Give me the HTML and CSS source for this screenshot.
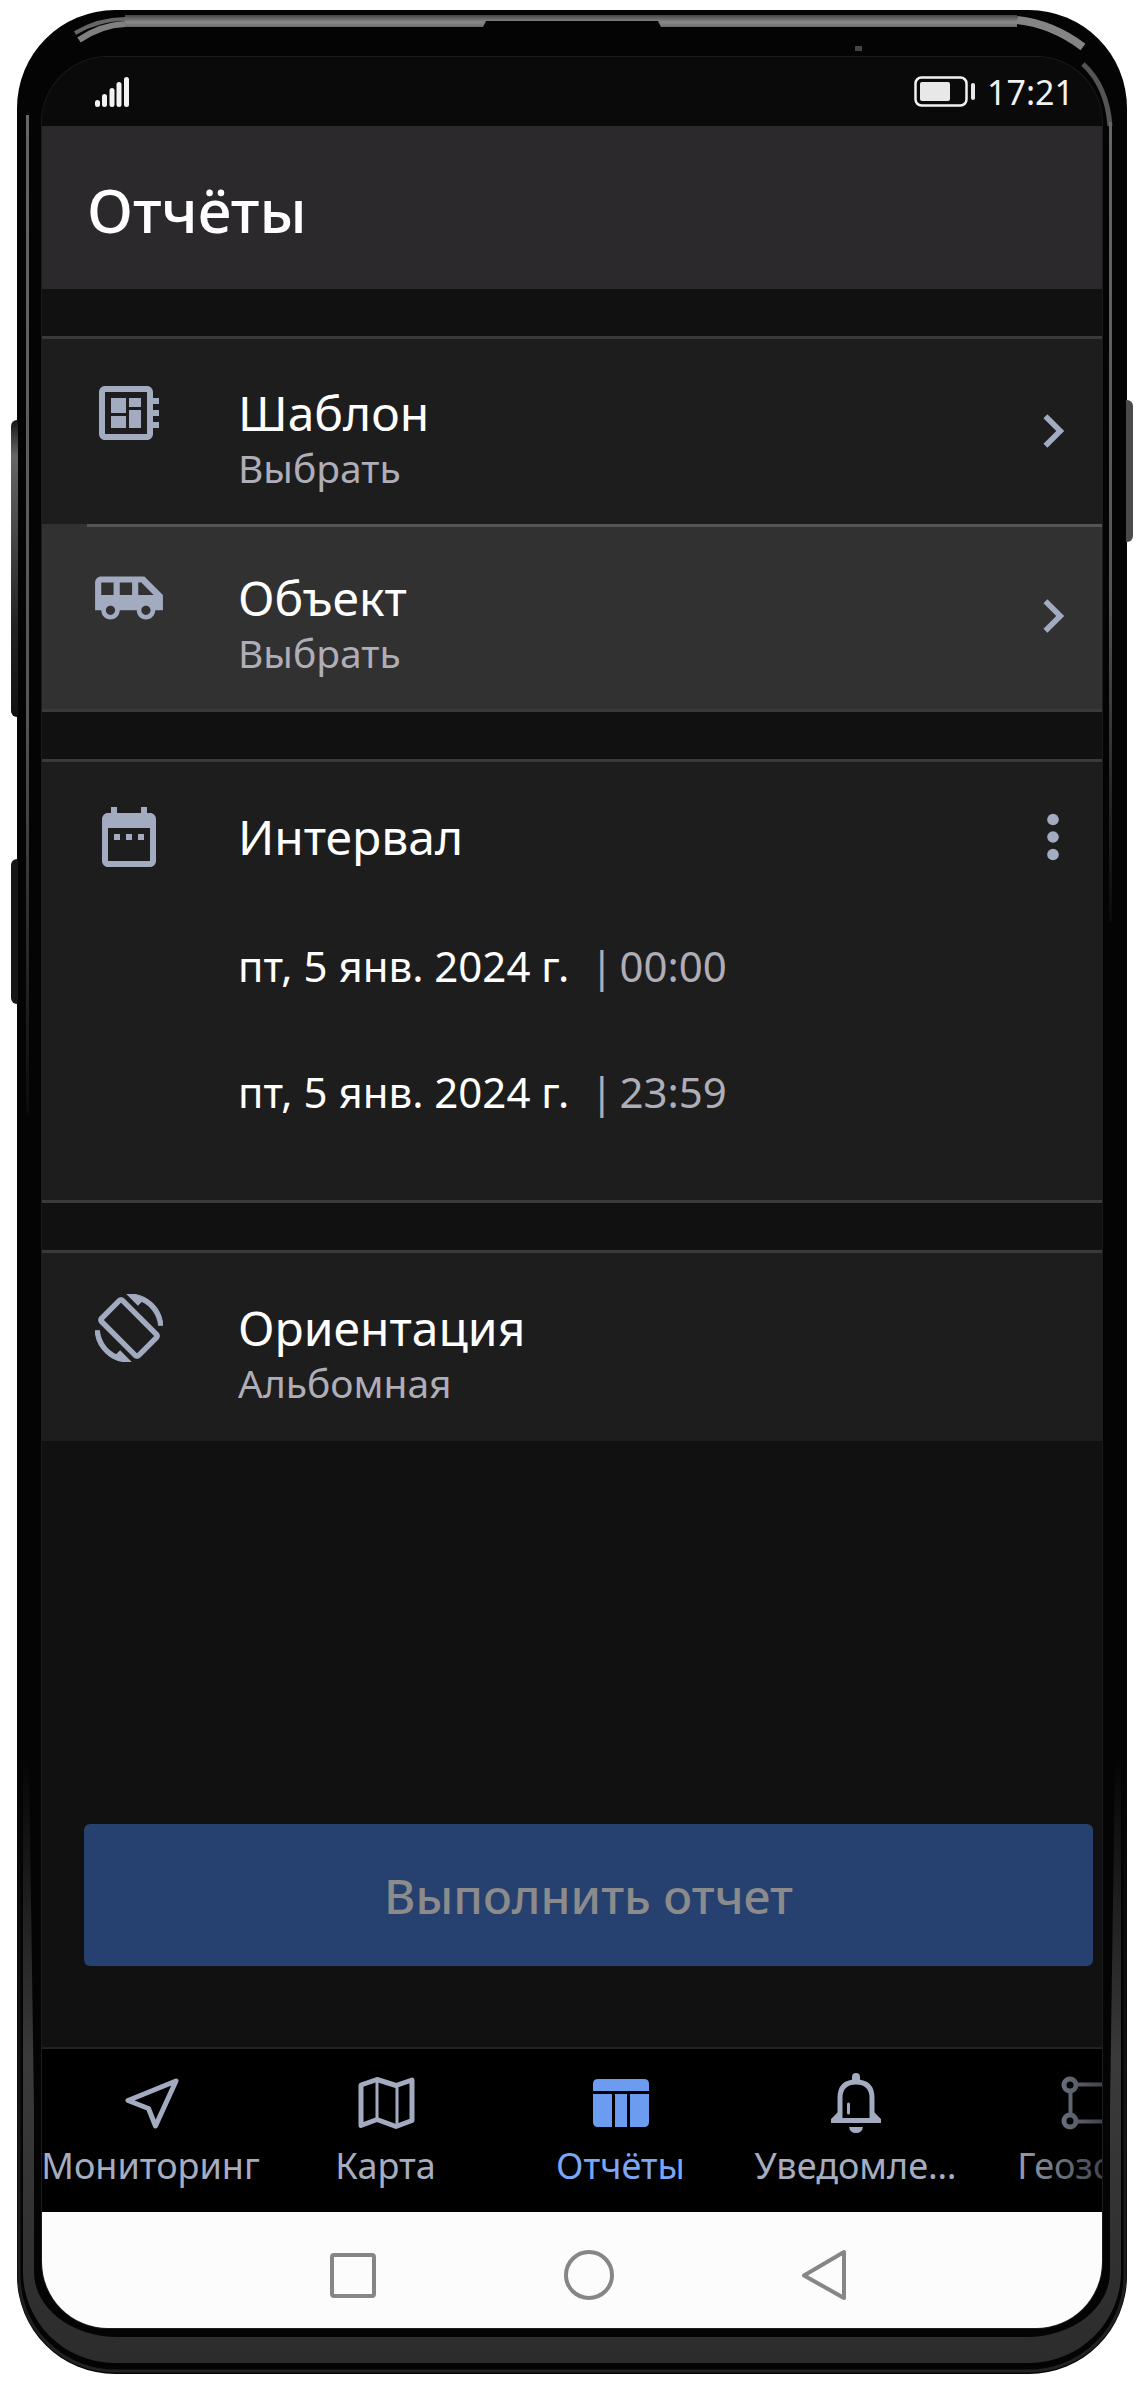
FILE: index.html
```html
<!DOCTYPE html>
<html lang="ru">
<head>
  <meta charset="UTF-8" />
  <meta name="viewport" content="width=device-width, initial-scale=1.0" />
  <title>Отчёты</title>
  <link rel="stylesheet" href="styles.css">
</head>
<body>
  <div class="phone">
    <span class="side-key volume"></span>
    <span class="side-key assistant"></span>
    <span class="side-key power"></span>

    <!-- phone body highlights -->
    <svg class="frame" viewBox="0 0 1110 2364" preserveAspectRatio="none" aria-hidden="true">
      <defs>
        <linearGradient id="sideLeft" x1="0" y1="0" x2="0" y2="1">
          <stop offset="0" stop-color="#666" />
          <stop offset="0.6" stop-color="#555" />
          <stop offset="1" stop-color="#0a0a0a" />
        </linearGradient>
        <linearGradient id="topBar" x1="0" y1="0" x2="0" y2="1">
          <stop offset="0" stop-color="#444" />
          <stop offset="0.6" stop-color="#8a8a8a" />
          <stop offset="1" stop-color="#6a6a6a" />
        </linearGradient>
        <linearGradient id="lower" gradientUnits="userSpaceOnUse" x1="0" y1="1750" x2="0" y2="2350">
          <stop offset="0" stop-color="#050505" />
          <stop offset="0.5" stop-color="#3a3a3a" />
          <stop offset="1" stop-color="#2c2c2c" />
        </linearGradient>
        <linearGradient id="lip" gradientUnits="userSpaceOnUse" x1="0" y1="1750" x2="0" y2="2350">
          <stop offset="0" stop-color="#040404" />
          <stop offset="1" stop-color="#222" />
        </linearGradient>
      </defs>
      <path d="M108 5 H1000 L1000 17 H644 L641 11 H469 L466 17 H108 Z" fill="url(#topBar)" />
      <path d="M58 23 Q82 9 108 9" fill="none" stroke="#666" stroke-width="4" />
      <path d="M62 30 Q84 15 108 14" fill="none" stroke="#808080" stroke-width="6" />
      <path d="M1000 10 Q1036 14 1066 37" fill="none" stroke="#858585" stroke-width="8" />
      <path d="M1066 54 Q1090 76 1093 116" fill="none" stroke="#555" stroke-width="5" />
      <rect x="9" y="105" width="3" height="1000" fill="url(#sideLeft)" />
      <rect x="1092" y="112" width="3" height="800" fill="url(#sideLeft)" />
      <rect x="838" y="36" width="7" height="5" fill="#444" />
      <path d="M6 1750 V2262 A92 91 0 0 0 98 2353 H1012 A92 91 0 0 0 1104 2262 V1750 H1098 L1093 2100 V2262 A83 65 0 0 1 1010 2327 H100 A83 65 0 0 1 17 2262 V2100 L12 1750 Z" fill="url(#lower)" />
      <path d="M2 1750 V2266 A96 95 0 0 0 98 2361 H1012 A96 95 0 0 0 1108 2266 V1750" fill="none" stroke="url(#lip)" stroke-width="3" />
    </svg>

    <div class="screen">
      <div class="status-bar">
        <svg class="signal" viewBox="0 0 34 30" role="img" aria-label="Сигнал">
          <path d="M2.5 25.500V27.500M9.500 19.500V27.500M17 13.500V27.500M24 7.500V27.500M31.500 2.500V27.500" stroke="#f2f2f2" stroke-width="5" stroke-linecap="round" />
        </svg>
        <div class="status-right">
          <svg class="battery" viewBox="0 0 61 32" role="img" aria-label="Батарея">
            <rect x="1.500" y="1.500" width="51" height="28" rx="6" fill="none" stroke="#f2f2f2" stroke-width="2.500" />
            <rect x="6" y="6" width="30" height="19" rx="2" fill="#e8e8e8" />
            <rect x="57" y="7" width="4" height="17" rx="2" fill="#e8e8e8" />
          </svg>
          <time>17:21</time>
        </div>
      </div>

      <header class="header">
        <h1>Отчёты</h1>
      </header>

      <main class="content">
        <section class="group closed">
          <button class="item">
            <span class="item-icon">
              <svg width="72" height="72" viewBox="0 0 24 24"><path d="M22 9V7h-2V5c0-1.100-.9-2-2-2H4c-1.100 0-2 .9-2 2v14c0 1.100.9 2 2 2h14c1.100 0 2-.9 2-2v-2h2v-2h-2v-2h2v-2h-2V9h2zm-4 10H4V5h14v14zM6 13h5v4H6v-4zm6-6h4v3h-4V7zM6 7h5v5H6V7zm6 4h4v6h-4v-6z" /></svg>
            </span>
            <span class="item-text">
              <span class="item-title">Шаблон</span>
              <span class="item-value">Выбрать</span>
            </span>
            <svg class="chevron" viewBox="0 0 24 24"><path d="M10 6L8.590 7.410 13.170 12l-4.580 4.590L10 18l6-6z" /></svg>
          </button>
          <button class="item pressed">
            <span class="item-icon">
              <svg width="74" height="74" viewBox="0 0 24 24"><path d="M17 5H3c-1.100 0-2 .89-2 2v9h2c0 1.650 1.340 3 3 3s3-1.350 3-3h5.500c0 1.650 1.340 3 3 3s3-1.350 3-3H23v-5l-6-6zM3 11V7h4v4H3zm3 6.500c-.83 0-1.500-.67-1.500-1.500s.67-1.500 1.500-1.500 1.500.67 1.500 1.500-.67 1.500-1.500 1.500zm7-6.500H9V7h4v4zm4.500 6.500c-.83 0-1.500-.67-1.500-1.500s.67-1.500 1.500-1.500 1.500.67 1.500 1.500-.67 1.500-1.500 1.500zM15 11V7h1l4 4h-5z" /></svg>
            </span>
            <span class="item-text">
              <span class="item-title">Объект</span>
              <span class="item-value">Выбрать</span>
            </span>
            <svg class="chevron" viewBox="0 0 24 24"><path d="M10 6L8.590 7.410 13.170 12l-4.580 4.590L10 18l6-6z" /></svg>
          </button>
        </section>

        <section class="group closed interval">
          <div class="interval-head">
            <span class="item-icon">
              <svg width="72" height="72" viewBox="0 0 24 24"><path d="M9 11H7v2h2v-2zm4 0h-2v2h2v-2zm4 0h-2v2h2v-2zm2-7h-1V2h-2v2H8V2H6v2H5c-1.110 0-1.990.9-1.990 2L3 20c0 1.100.89 2 2 2h14c1.100 0 2-.9 2-2V6c0-1.100-.9-2-2-2zm0 16H5V9h14v11z" /></svg>
            </span>
            <h2 class="item-title">Интервал</h2>
            <button class="more" aria-label="Ещё">
              <svg width="70" height="70" viewBox="0 0 24 24"><circle cx="12" cy="6" r="2" /><circle cx="12" cy="12" r="2" /><circle cx="12" cy="18" r="2" /></svg>
            </button>
          </div>
          <div class="date-row">
            <button class="date">пт, 5 янв. 2024 г.</button>
            <span class="bar">|</span>
            <button class="time">00:00</button>
          </div>
          <div class="date-row">
            <button class="date">пт, 5 янв. 2024 г.</button>
            <span class="bar">|</span>
            <button class="time">23:59</button>
          </div>
        </section>

        <section class="group">
          <button class="item single">
            <span class="item-icon">
              <svg width="68" height="68" viewBox="0 0 24 24" stroke="#a2abc0" stroke-width="0.400"><path d="M16.480 2.520c3.270 1.550 5.610 4.720 5.970 8.480h1.500C23.440 4.840 18.290 0 12 0l-.66.03 3.810 3.810 1.330-1.320zm-6.250-.77c-.59-.59-1.540-.59-2.120 0L1.750 8.110c-.59.59-.59 1.540 0 2.120l12.020 12.020c.59.59 1.540.59 2.120 0l6.360-6.360c.59-.59.59-1.540 0-2.120L10.230 1.750zm4.600 19.440L2.810 9.170l6.360-6.360 12.020 12.020-6.360 6.360zm-7.310.29C4.250 19.940 1.910 16.760 1.550 13H.05C.56 19.160 5.710 24 12 24l.66-.03-3.810-3.810-1.330 1.320z" /></svg>
            </span>
            <span class="item-text">
              <span class="item-title">Ориентация</span>
              <span class="item-value">Альбомная</span>
            </span>
          </button>
        </section>

        <button class="run" disabled>Выполнить отчет</button>
      </main>

      <nav class="tabs">
        <a href="#" class="tab">
          <svg viewBox="0 0 56 56"><path d="M53 4L5 23.500L25.500 31.500L32.500 49Z" fill="none" stroke="#a2abbf" stroke-width="5" stroke-linejoin="round" /></svg>
          <span>Мониторинг</span>
        </a>
        <a href="#" class="tab">
          <svg viewBox="0 0 56 56" fill="none" stroke="#a2abbf" stroke-linejoin="round"><path d="M3 8L19 2.500L38 8.500L54 3V43.500L38 49.500L19 42.500L3 48.500Z" stroke-width="5" /><path d="M19 3V43M39 8V49" stroke-width="3" /></svg>
          <span>Карта</span>
        </a>
        <a href="#" class="tab active">
          <svg viewBox="0 0 56 56" fill="#6c9cf0"><path d="M0 14V7Q0 2 5 2H51Q56 2 56 7V14Z" /><path d="M0 17H19V50H5Q0 50 0 45Z" /><path d="M22 17H34V50H22Z" /><path d="M37 17H56V45Q56 50 51 50H37Z" /></svg>
          <span>Отчёты</span>
        </a>
        <a href="#" class="tab">
          <svg viewBox="0 0 56 56" fill="#a2abbf"><path d="M24 4V0a4 4 0 0 1 8 0V4Z" /><path d="M12 42V21Q12 5 28 5T44 21V42" fill="none" stroke="#a2abbf" stroke-width="5" /><path d="M10 35L3 42V46H53V42L46 35V41H10Z" /><path d="M20.500 27V36" stroke="#a2abbf" stroke-width="3" stroke-linecap="round" /><path d="M21 50H35Q34 56 28 56T21 50Z" /></svg>
          <span>Уведомле…</span>
        </a>
        <a href="#" class="tab">
          <svg viewBox="0 0 56 56" fill="none" stroke="#a2abbf"><g stroke-width="5"><circle cx="7" cy="8" r="6" /><circle cx="7" cy="44" r="6" /><circle cx="49" cy="8" r="6" /><circle cx="49" cy="44" r="6" /></g><path d="M14 7.500H42M14 44.500H42M7.500 15V37M49 15V37" stroke-width="4" /></svg>
          <span>Геозоны</span>
        </a>
      </nav>

      <div class="system-bar">
        <button aria-label="Недавние"><svg viewBox="0 0 52 52"><rect x="5" y="6" width="42" height="41" rx="2" /></svg></button>
        <button aria-label="Домой"><svg viewBox="0 0 52 52"><circle cx="26" cy="26" r="23" /></svg></button>
        <button aria-label="Назад"><svg viewBox="0 0 52 52"><path d="M45 3V49L5 26.500Z" /></svg></button>
      </div>
    </div>
  </div>
</body>
</html>
```
FILE: styles.css
```css
:root {
  --screen-bg: #111;
  --group-bg: #1d1d1d;
  --line: #3a3a3c;
  --icon: #a2abc0;
  --muted: #afadb7;
}

* {
  box-sizing: border-box;
}

body {
  margin: 0;
  padding: 10px 16px 15px 17px;
  min-height: 100vh;
  display: flex;
  background: #fff;
  font-family: 'Noto Sans', sans-serif;
  color: #fff;
}

h1,
h2 {
  margin: 0;
}

button {
  margin: 0;
  padding: 0;
  border: none;
  background: none;
  font: inherit;
  color: inherit;
  text-align: left;
}

.phone {
  position: relative;
  flex: 1;
  min-width: 0;
  display: flex;
  padding: 47px 25px 46px;
  border-radius: 98px;
  background: #040404;
}

.frame {
  position: absolute;
  inset: 0;
  width: 100%;
  height: 100%;
}

.side-key {
  position: absolute;
  width: 7px;
  background: linear-gradient(#151515, #666 12%, #222 70%, #111);
}

.volume {
  left: -6px;
  top: 410px;
  height: 297px;
  border-radius: 6px 0 0 6px;
}

.assistant {
  left: -6px;
  top: 849px;
  height: 145px;
  border-radius: 6px 0 0 6px;
  background: #161616;
}

.power {
  right: -6px;
  top: 390px;
  height: 142px;
  border-radius: 0 6px 6px 0;
  background: #4a4a4a;
}

.screen {
  position: relative;
  flex: 1;
  min-width: 0;
  display: flex;
  flex-direction: column;
  overflow: hidden;
  border-radius: 66px;
  background: var(--screen-bg);
  box-shadow: 0 0 0 1px #1c1c1c;
}

/* status bar */
.status-bar {
  height: 69px;
  padding: 0 28px 0 53px;
  display: flex;
  align-items: center;
  justify-content: space-between;
  background: #0a0a0a;
}

.signal {
  width: 34px;
  height: 30px;
}

.status-right {
  display: flex;
  align-items: center;
  gap: 12px;
  font-size: 34px;
  line-height: 48px;
  color: #f2f2f2;
}

.battery {
  width: 61px;
  height: 32px;
}

.header {
  padding: 43px 45px 38px;
  background: #2b292c;
}

.header h1 {
  font-size: 60px;
  line-height: 82px;
  font-weight: 500;
}

/* settings list */
.content {
  flex: 1;
  display: flex;
  flex-direction: column;
}

.group {
  margin-top: 47px;
  border-top: 3px solid var(--line);
  background: var(--group-bg);
}

.closed {
  border-bottom: 3px solid var(--line);
}

.item {
  position: relative;
  width: 100%;
  padding: 45px 25px 30px 47px;
  display: flex;
  gap: 69px;
}

.single {
  padding-top: 46px;
  padding-bottom: 32px;
}

.pressed {
  background: #313131;
}

.pressed::before {
  content: "";
  position: absolute;
  top: 0;
  left: 45px;
  right: 0;
  height: 3px;
  background: #555;
}

.item-icon {
  width: 80px;
  height: 58px;
  display: flex;
  flex-shrink: 0;
  align-items: center;
  justify-content: center;
}

.item-icon svg,
.more svg,
.chevron {
  flex-shrink: 0;
  fill: var(--icon);
}

.item-text {
  flex: 1;
  display: flex;
  flex-direction: column;
}

.item-title {
  font-size: 48px;
  line-height: 58px;
  font-weight: 400;
}

.item-value {
  font-size: 39px;
  line-height: 52px;
  color: var(--muted);
}

.chevron {
  width: 48px;
  height: 68px;
  align-self: center;
  margin-bottom: 16px;
  overflow: visible;
}

.chevron path {
  transform: scale(1.4);
  transform-origin: center;
}

.interval {
  padding-bottom: 45px;
}

.interval-head {
  padding: 46px 25px 37px 47px;
  display: flex;
  gap: 69px;
}

.interval-head h2 {
  flex: 1;
}

.more {
  width: 48px;
  height: 58px;
  display: flex;
  align-items: center;
  justify-content: center;
}

.date-row {
  height: 126px;
  padding-left: 196px;
  display: flex;
  align-items: center;
  font-size: 42px;
  line-height: 58px;
}

.bar {
  margin-left: 21px;
  margin-right: 6px;
}

.bar,
.time {
  color: var(--muted);
}

.run {
  margin: auto 9px 81px 42px;
  padding: 39px 38px 37px;
  border-radius: 6px;
  background: #26406f;
  color: #8b8b8b;
  font-size: 48px;
  line-height: 66px;
  font-weight: 500;
  text-align: center;
}

/* bottom navigation */
.tabs {
  position: relative;
  display: flex;
  overflow: hidden;
  padding: 28px 0 22px;
  border-top: 2px solid #222;
  background: #000;
}

.tabs::after {
  content: "";
  position: absolute;
  top: 0;
  right: 0;
  bottom: 0;
  width: 100px;
  background: linear-gradient(to right, transparent, rgba(0, 0, 0, 0.6));
}

.tab {
  flex: 0 0 235px;
  display: flex;
  flex-direction: column;
  align-items: center;
  gap: 9px;
  color: #a6adc0;
  font-size: 36px;
  line-height: 48px;
  text-decoration: none;
}

.tab:first-child {
  margin-left: -9px;
}

.tab svg {
  width: 56px;
  height: 56px;
  overflow: visible;
}

.active {
  color: #7ba7fa;
}

.system-bar {
  padding: 37px 0 27px 33px;
  display: flex;
  justify-content: center;
  gap: 184px;
  background: #fcfcfc;
}

.system-bar button {
  height: 52px;
}

.system-bar svg {
  width: 52px;
  height: 52px;
  fill: none;
  stroke: #868686;
  stroke-width: 4px;
  stroke-linejoin: round;
}
```
